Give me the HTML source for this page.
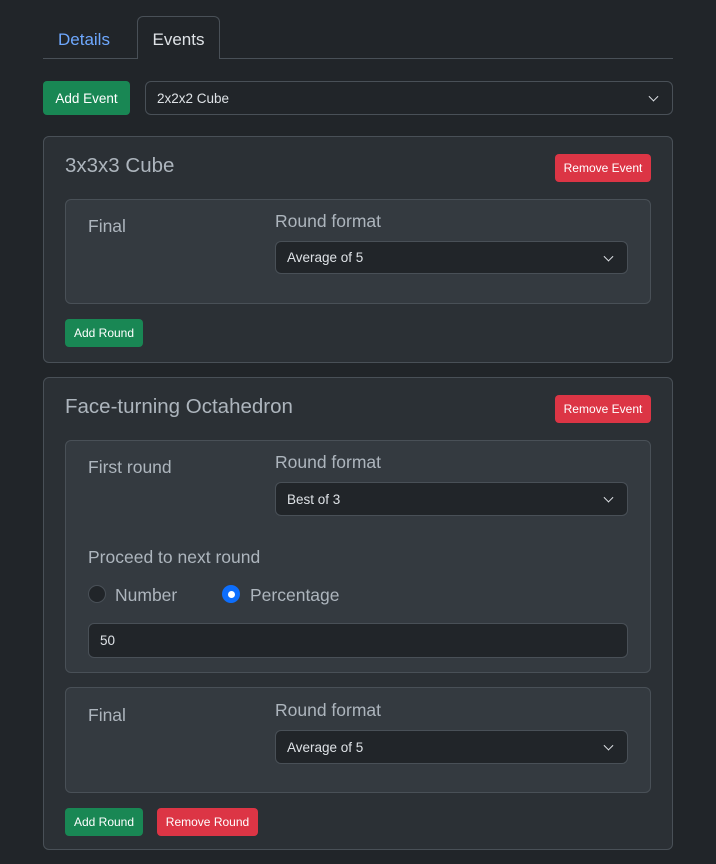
<!DOCTYPE html><html><head><style>
*{box-sizing:border-box;margin:0;padding:0}
body{width:716px;height:864px;background:#212529;font-family:"Liberation Sans",sans-serif;color:#dee2e6;position:relative;overflow:hidden}
.a{position:absolute}
.lbl{color:#adb5bd;font-size:17.5px;line-height:20px}
.btn{position:absolute;border-radius:4px;color:#fff;font-size:12px;display:flex;align-items:center;justify-content:center}
.g{background:#198754}.r{background:#dc3545}
.card{position:absolute;background:#2b3035;border:1px solid #495057;border-radius:6px}
.inner{position:absolute;background:#343a40;border:1px solid #495057;border-radius:6px}
.sel{position:absolute;background:#212529;border:1px solid #495057;border-radius:6px;color:#dee2e6;font-size:13.5px;display:flex;align-items:center;padding-left:11px}
.sel:after{content:"";position:absolute;right:15px;top:50%;width:6px;height:6px;border-right:1.6px solid #dee2e6;border-bottom:1.6px solid #dee2e6;transform:translateY(-70%) rotate(45deg)}
.noarrow:after{display:none}
</style></head><body>
<div class="a" style="left:43px;top:58px;width:630px;height:1px;background:#495057"></div>
<div class="a" style="left:58px;top:30px;color:#6ea8fe;font-size:17px">Details</div>
<div class="a" style="left:137px;top:16px;width:83px;height:43px;border:1px solid #495057;border-bottom:none;border-radius:6px 6px 0 0;background:#212529;text-align:center;padding-top:13px;font-size:17px;color:#dee2e6">Events</div>
<div class="btn g" style="left:43px;top:81px;width:87px;height:34px;font-size:13.5px">Add Event</div>
<div class="sel" style="left:145px;top:81px;width:528px;height:34px">2x2x2 Cube</div>

<div class="card" style="left:43px;top:136px;width:630px;height:227px"></div>
<div class="a lbl" style="left:65px;top:154px;font-size:20.5px;line-height:24px">3x3x3 Cube</div>
<div class="btn r" style="left:555px;top:154px;width:96px;height:28px">Remove Event</div>
<div class="inner" style="left:65px;top:199px;width:586px;height:105px"></div>
<div class="a lbl" style="left:88px;top:216px">Final</div>
<div class="a lbl" style="left:275px;top:211px">Round format</div>
<div class="sel" style="left:275px;top:241px;width:353px;height:33px">Average of 5</div>
<div class="btn g" style="left:65px;top:319px;width:78px;height:28px">Add Round</div>

<div class="card" style="left:43px;top:377px;width:630px;height:473px"></div>
<div class="a lbl" style="left:65px;top:395px;font-size:20.5px;line-height:24px">Face-turning Octahedron</div>
<div class="btn r" style="left:555px;top:395px;width:96px;height:28px">Remove Event</div>
<div class="inner" style="left:65px;top:440px;width:586px;height:233px"></div>
<div class="a lbl" style="left:88px;top:457px">First round</div>
<div class="a lbl" style="left:275px;top:452px">Round format</div>
<div class="sel" style="left:275px;top:482px;width:353px;height:34px">Best of 3</div>
<div class="a lbl" style="left:88px;top:547px">Proceed to next round</div>
<div class="a" style="left:88px;top:585px;width:18px;height:18px;border-radius:50%;background:#212529;border:1px solid #495057"></div>
<div class="a lbl" style="left:115px;top:585px">Number</div>
<div class="a" style="left:222px;top:585px;width:18px;height:18px;border-radius:50%;background:#0d6efd"><div class="a" style="left:5.5px;top:5.5px;width:7px;height:7px;border-radius:50%;background:#fff"></div></div>
<div class="a lbl" style="left:250px;top:585px">Percentage</div>
<div class="sel noarrow" style="left:88px;top:623px;width:540px;height:35px">50</div>
<div class="inner" style="left:65px;top:687px;width:586px;height:106px"></div>
<div class="a lbl" style="left:88px;top:705px">Final</div>
<div class="a lbl" style="left:275px;top:700px">Round format</div>
<div class="sel" style="left:275px;top:730px;width:353px;height:34px">Average of 5</div>
<div class="btn g" style="left:65px;top:808px;width:78px;height:28px">Add Round</div>
<div class="btn r" style="left:157px;top:808px;width:101px;height:28px">Remove Round</div>
</body></html>
